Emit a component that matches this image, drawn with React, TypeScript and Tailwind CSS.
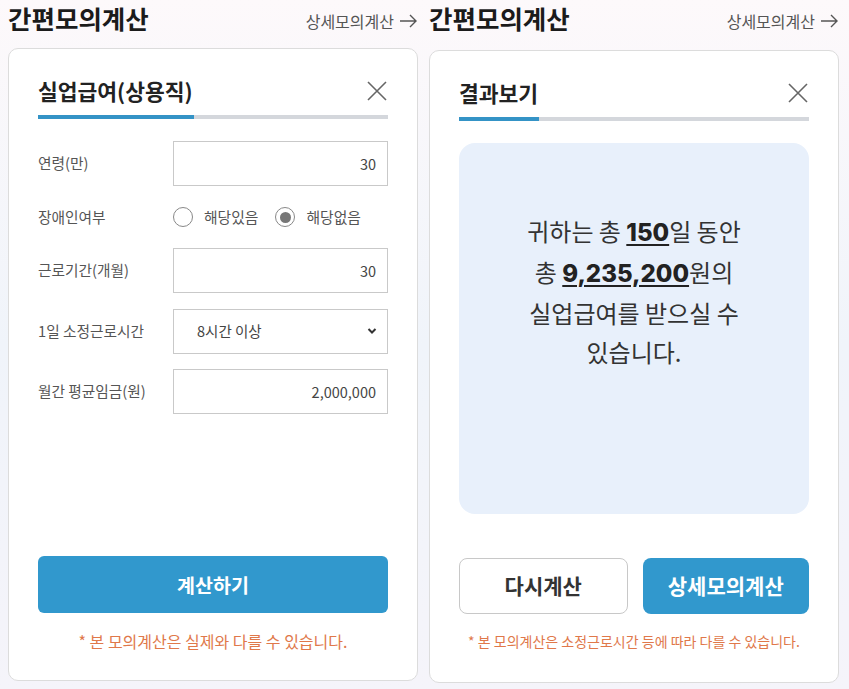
import React from 'react'

const kr = { fontFamily: '"Noto Sans CJK KR", "Noto Sans", sans-serif' }

function CloseIcon() {
  return (
    <svg width="22" height="22" viewBox="0 0 22 22" fill="none" stroke="#666" strokeWidth="1.6">
      <path d="M2 2 L20 20 M20 2 L2 20" />
    </svg>
  )
}

function Arrow() {
  return (
    <svg width="19" height="14" viewBox="0 0 19 14" fill="none" stroke="#555" strokeWidth="1.4">
      <path d="M1 7 H17 M11 1 L17 7 L11 13" />
    </svg>
  )
}

function Heading() {
  return (
    <div className="flex items-end justify-between h-[34px]">
      <h1 className="self-start text-[25.5px] font-bold text-[#1b1b1b] leading-[36px]">간편모의계산</h1>
      <a className="flex items-center gap-[5px] text-[16px] text-[#555] pb-[1px]">
        상세모의계산 <Arrow />
      </a>
    </div>
  )
}

function CardHeader({ title, fill }: { title: string; fill: string }) {
  return (
    <>
      <div className="flex items-center justify-between h-[28px]">
        <h2 className="text-[21.5px] font-bold text-[#222]">{title}</h2>
        <CloseIcon />
      </div>
      <div className="mt-[10px] h-[4px] bg-[#d4d7dc] flex">
        <div className={`h-full bg-[#3493c6] ${fill}`} />
      </div>
    </>
  )
}

function Row({ label, children }: { label: string; children: React.ReactNode }) {
  return (
    <div className="flex items-center">
      <div className="w-[135px] text-[14.7px] text-[#555]">{label}</div>
      <div className="flex-1">{children}</div>
    </div>
  )
}

function NumInput({ value }: { value: string }) {
  return (
    <div className="h-[45px] border border-[#c9c9c9] flex items-center justify-end pr-[11px] text-[14.5px] text-[#444]">
      {value}
    </div>
  )
}

function Radio({ checked, label }: { checked?: boolean; label: string }) {
  return (
    <label className="flex items-center gap-[11px] text-[14.8px] text-[#555]">
      <span className="w-[20px] h-[20px] rounded-full border border-[#888] flex items-center justify-center bg-white">
        {checked && <span className="w-[11px] h-[11px] rounded-full bg-[#777]" />}
      </span>
      {label}
    </label>
  )
}

export default function App() {
  return (
    <div
      style={kr}
      className="w-[849px] h-[689px] overflow-hidden bg-gradient-to-b from-[#fdf9fb] via-[#f0f4fa] to-[#f5f4fa] flex gap-[11px] pl-[8px]"
    >
      {/* left column */}
      <div className="w-[410px] flex flex-col">
        <Heading />
        <div className="mt-[14px] h-[633px] bg-white border border-[#dcdcdc] rounded-[10px] pt-[28px] px-[29px] pb-[29px] flex flex-col">
          <CardHeader title="실업급여(상용직)" fill="w-[156px]" />
          <div className="mt-[22px] flex flex-col gap-[15.5px]">
            <Row label="연령(만)">
              <NumInput value="30" />
            </Row>
            <Row label="장애인여부">
              <div className="h-[31px] flex items-center gap-[17px]">
                <Radio label="해당있음" />
                <Radio checked label="해당없음" />
              </div>
            </Row>
            <Row label="근로기간(개월)">
              <NumInput value="30" />
            </Row>
            <Row label="1일 소정근로시간">
              <div className="h-[45px] border border-[#c9c9c9] flex items-center justify-between pl-[23px] pr-[10px] text-[14.5px] text-[#444]">
                8시간 이상
                <svg width="10" height="8" viewBox="0 0 10 8" fill="none" stroke="#333" strokeWidth="2">
                  <path d="M1.5 2 L5 5.5 L8.5 2" />
                </svg>
              </div>
            </Row>
            <Row label="월간 평균임금(원)">
              <NumInput value="2,000,000" />
            </Row>
          </div>
          <div className="mt-auto">
            <button className="w-full h-[57px] rounded-[6px] bg-[#3198cd] text-white text-[19.5px] font-bold">
              계산하기
            </button>
            <p className="mt-[18px] text-center text-[16px] leading-[20px] text-[#e0784a]">
              * 본 모의계산은 실제와 다를 수 있습니다.
            </p>
          </div>
        </div>
      </div>

      {/* right column */}
      <div className="w-[410px] flex flex-col">
        <Heading />
        <div className="mt-[16px] h-[633px] bg-white border border-[#dcdcdc] rounded-[10px] pt-[28px] px-[29px] pb-[31px] flex flex-col">
          <CardHeader title="결과보기" fill="w-[80px]" />
          <div className="mt-[22px] h-[371px] rounded-[16px] bg-[#e8f0fb] pt-[68px] text-center text-[24px] leading-[39px] text-[#333]">
            귀하는 총{' '}
            <b className="underline underline-offset-[3px] decoration-[2px] font-extrabold text-[#222]" style={{ fontFamily: 'Inter, sans-serif' }}>
              150
            </b>
            일 동안
            <br />총{' '}
            <b className="underline underline-offset-[3px] decoration-[2px] font-extrabold text-[#222]" style={{ fontFamily: 'Inter, sans-serif' }}>
              9,235,200
            </b>
            원의
            <br />
            실업급여를 받으실 수
            <br />
            있습니다.
          </div>
          <div className="mt-auto">
            <div className="flex gap-[15px]">
              <button className="flex-1 h-[56px] rounded-[8px] border border-[#c8c8c8] bg-white text-[#333] text-[21px] font-bold">
                다시계산
              </button>
              <button className="flex-1 h-[56px] rounded-[8px] bg-[#3198cd] text-white text-[21px] font-bold">
                상세모의계산
              </button>
            </div>
            <p className="mt-[17px] text-center text-[14px] leading-[20px] text-[#e0784a]">
              * 본 모의계산은 소정근로시간 등에 따라 다를 수 있습니다.
            </p>
          </div>
        </div>
      </div>
    </div>
  )
}
